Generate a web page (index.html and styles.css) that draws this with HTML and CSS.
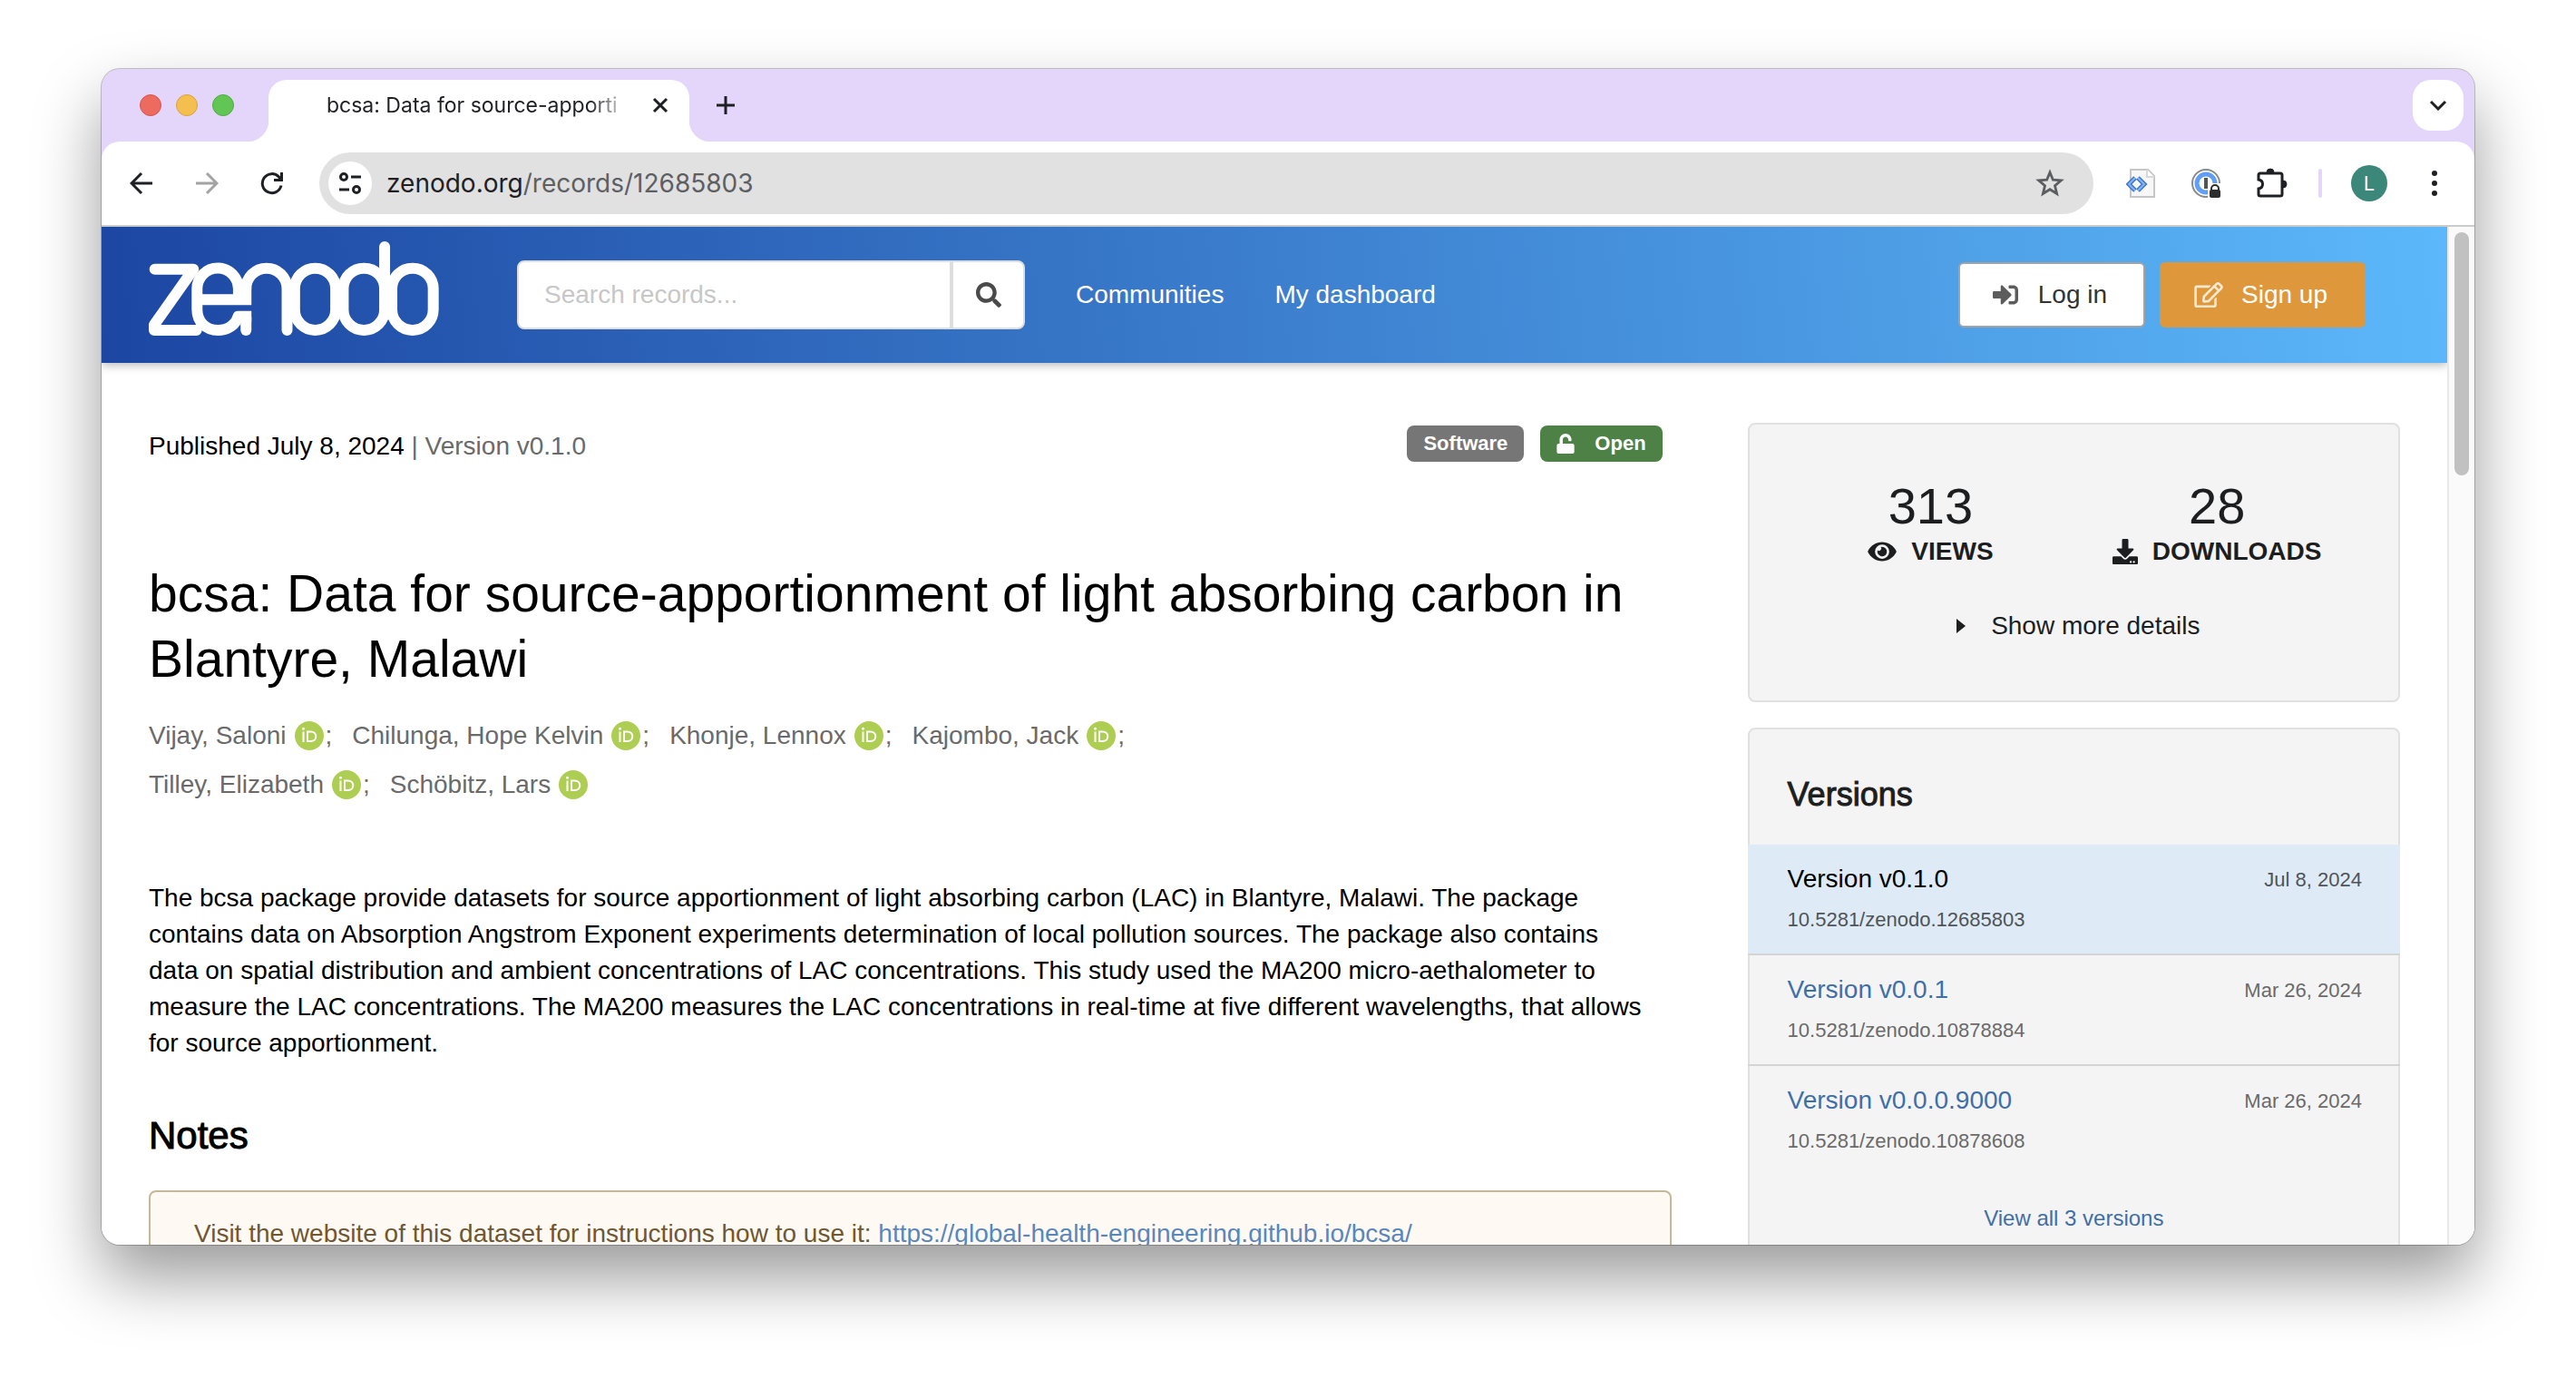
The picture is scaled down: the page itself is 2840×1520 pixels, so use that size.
FILE: index.html
```html
<!DOCTYPE html>
<html lang="en">
<head>
<meta charset="utf-8">
<title>bcsa: Data for source-apportionment of light absorbing carbon in Blantyre, Malawi</title>
<link rel="stylesheet" href="styles.css">
</head>
<body>
<svg class="defs" aria-hidden="true">
  <symbol id="orcid" viewBox="0 0 32 32">
    <circle cx="16" cy="16" r="16" fill="#aece53"/>
    <g fill="none" stroke="#fff" stroke-width="2">
      <path d="M9.500 11.500V23M14 11.500h3.500c3.700 0 5.800 2.400 5.800 5.300S21.200 22 17.500 22H14z"/>
    </g>
    <circle cx="9.500" cy="8.300" r="1.500" fill="#fff"/>
  </symbol>
</svg>
<div class="window">
  <div class="tabstrip">
    <div class="lights"><span class="light red"></span><span class="light amber"></span><span class="light green"></span></div>
    <div class="tab">
      <span class="tab-title">bcsa: Data for source-apporti</span>
      <button class="plain tab-close" aria-label="Close tab"><svg width="18" height="18" viewBox="0 0 18 18"><path d="M2 2l14 14M16 2L2 16" stroke="#1f2024" stroke-width="3" fill="none"/></svg></button>
    </div>
    <button class="plain new-tab" aria-label="New tab"><svg width="20" height="20" viewBox="0 0 20 20"><path d="M10 0v20M0 10h20" stroke="#1f2024" stroke-width="3"/></svg></button>
    <button class="plain tab-search" aria-label="Search tabs"><svg width="20" height="12" viewBox="0 0 20 12"><path d="M2 2l8 8 8-8" stroke="#1f2024" stroke-width="3" fill="none"/></svg></button>
  </div>
  <div class="toolbar">
    <button class="plain tool" aria-label="Back"><svg width="26" height="26" viewBox="0 0 26 26"><path d="M25 13H3M13 2L2 13l11 11" stroke="#1f2024" stroke-width="3" fill="none"/></svg></button>
    <button class="plain tool" aria-label="Forward"><svg width="26" height="26" viewBox="0 0 26 26"><path d="M1 13h22M13 2l11 11-11 11" stroke="#a3a3a3" stroke-width="3" fill="none"/></svg></button>
    <button class="plain tool" aria-label="Reload"><svg width="26" height="26" viewBox="0 0 26 26"><path d="M23 15.500A10.500 10.500 0 1 1 20.500 6l2.500 3" stroke="#1f2024" stroke-width="3" fill="none"/><path d="M25 1v10H15V8h7V1z" fill="#1f2024"/></svg></button>
    <div class="omnibox">
      <button class="plain site-info" aria-label="Site information"><svg width="26" height="26" viewBox="0 0 26 26" fill="none" stroke="#1f2024" stroke-width="3"><circle cx="6" cy="6" r="3.500"/><path d="M14 6h11M1 20h11"/><circle cx="20" cy="20" r="3.500"/></svg></button>
      <span class="url">zenodo.org<span class="url-path">/records/12685803</span></span>
      <button class="plain tool" aria-label="Bookmark this page"><svg width="32" height="32" viewBox="0 0 32 32"><path d="M16 4l3.400 8.200 8.900.7-6.800 5.800 2.100 8.700L16 22.700l-7.600 4.700 2.100-8.700-6.800-5.800 8.900-.7z" fill="none" stroke="#5b5d61" stroke-width="2.800"/></svg></button>
    </div>
    <button class="plain tool" aria-label="Code extension"><svg width="32" height="34" viewBox="0 0 32 34"><path d="M5 2h19l7 7v23H5z" fill="#f7f7f7" stroke="#c6c6c6" stroke-width="2"/><path d="M23 2v8h8" fill="#fff" stroke="#d8d8d8" stroke-width="2"/><path d="M10 11l-7 7 7 7M13 11l7 7-7 7" fill="none" stroke="#3f77cf" stroke-width="5"/><path d="M10 11l-7 7 7 7M13 11l7 7-7 7" fill="none" stroke="#84b3ee" stroke-width="2"/></svg></button>
    <button class="plain tool" aria-label="Password manager"><svg width="32" height="32" viewBox="0 0 32 32"><circle cx="16" cy="16" r="15" fill="#fff" stroke="#8a8a8a" stroke-width="2"/><circle cx="16" cy="16" r="10" fill="#fff" stroke="#609ff5" stroke-width="5"/><path d="M18 16h14v16H18z" fill="#fff"/><path d="M14 10h4v12h-4z" fill="#555"/><path d="M22 24v-2a4 4 0 0 1 8 0v2" fill="none" stroke="#2d2d2d" stroke-width="2"/><rect x="20" y="23" width="12" height="9" rx="2" fill="#2d2d2d"/></svg></button>
    <button class="plain tool" aria-label="Extensions"><svg width="36" height="36" viewBox="-1 0 36 36"><path d="M5 7h22q2 0 2 2v21q0 2-2 2H5q-2 0-2-2v-6c6-1 6-9 0-10V9q0-2 2-2z" fill="none" stroke="#1f2024" stroke-width="3"/><path d="M12 6a4 4 0 0 1 8 0zM30 15a4 4 0 0 1 0 8z" fill="#1f2024" stroke="#1f2024"/></svg></button>
    <span class="tool-divider"></span>
    <button class="plain avatar" aria-label="Profile">L</button>
    <button class="plain tool" aria-label="Menu"><svg width="6" height="28" viewBox="0 0 6 28" fill="#1f2024"><circle cx="3" cy="3" r="3"/><circle cx="3" cy="14" r="3"/><circle cx="3" cy="25" r="3"/></svg></button>
  </div>
  <div class="viewport">
    <div class="page">
      <header class="site-header">
        <a class="logo" href="#" aria-label="Zenodo home"><svg width="320" height="105" viewBox="42 47 961 315" fill="none" stroke="#fff" stroke-width="36" stroke-linejoin="round">
          <path stroke-linecap="round" d="M62 139H190L60 323V341H200M500 341V204a68 68 0 0 0-136 0M823 65V204"/>
          <path d="M364 200V258M202 240H382M339 240V204a68 68 0 0 0-137 0V272c0 42 30 69 69 69 34 0 60-20 67-46H382"/>
          <path stroke-linecap="round" d="M364 341V300"/>
          <rect x="525" y="136" width="136" height="205" rx="68"/>
          <rect x="686" y="136" width="137" height="205" rx="68"/>
          <rect x="847" y="136" width="137" height="205" rx="68"/>
        </svg></a>
        <form class="search">
          <input type="text" placeholder="Search records..." aria-label="Search records">
          <button type="button" aria-label="Search"><svg width="28" height="28" viewBox="0 0 512 512"><path fill="#4a4a4a" d="M505 442.700L405.300 343c-4.500-4.500-10.600-7-17-7H372c27.600-35.300 44-79.700 44-128C416 93.100 322.900 0 208 0S0 93.100 0 208s93.100 208 208 208c48.300 0 92.700-16.400 128-44v16.300c0 6.400 2.500 12.500 7 17l99.700 99.700c9.400 9.400 24.600 9.400 33.900 0l28.300-28.300c9.400-9.400 9.400-24.600.1-34zM208 336c-70.700 0-128-57.200-128-128 0-70.700 57.200-128 128-128 70.700 0 128 57.200 128 128 0 70.700-57.200 128-128 128z"/></svg></button>
        </form>
        <nav class="site-nav"><a href="#">Communities</a><a href="#">My dashboard</a></nav>
        <div class="account">
          <button class="login"><svg width="28" height="28" viewBox="0 0 512 512"><path fill="#5c5c5c" d="M416 448h-84c-6.600 0-12-5.400-12-12v-40c0-6.600 5.400-12 12-12h84c17.700 0 32-14.300 32-32V160c0-17.700-14.300-32-32-32h-84c-6.600 0-12-5.400-12-12V76c0-6.600 5.400-12 12-12h84c53 0 96 43 96 96v192c0 53-43 96-96 96zm-47-209L201 71c-15-15-41-4.500-41 17v96H24c-13.300 0-24 10.700-24 24v96c0 13.300 10.700 24 24 24h136v96c0 21.500 26 32 41 17l168-168c9.300-9.400 9.300-24.600 0-34z"/></svg>Log in</button>
          <button class="signup"><svg width="32" height="28" viewBox="0 0 576 512"><path fill="#fbe9d2" d="M402.300 344.900l32-32c5-5 13.700-1.500 13.700 5.700V464c0 26.500-21.500 48-48 48H48c-26.500 0-48-21.500-48-48V112c0-26.500 21.500-48 48-48h273.500c7.100 0 10.700 8.600 5.700 13.700l-32 32c-1.500 1.500-3.500 2.300-5.700 2.300H48v352h352V350.500c0-2.100.8-4.100 2.300-5.600zm156.600-201.800L296.300 405.700l-90.400 10c-26.200 2.900-48.500-19.200-45.600-45.600l10-90.400L432.900 17.100c22.900-22.900 59.900-22.900 82.700 0l43.200 43.200c22.900 22.900 22.900 60 .1 82.800zM460.100 174L402 115.900 216.200 301.800l-7.300 65.300 65.300-7.300L460.100 174zm64.800-79.700l-43.200-43.200c-4.100-4.100-10.800-4.100-14.800 0L436 82l58.100 58.100 30.900-30.900c4-4.200 4-10.800-.1-14.900z"/></svg>Sign up</button>
        </div>
      </header>
      <div class="columns">
        <main>
          <div class="meta">
            <p>Published July 8, 2024 <span class="muted">| Version v0.1.0</span></p>
            <div class="badges">
              <span class="badge">Software</span>
              <span class="badge open"><svg width="20" height="22" viewBox="0 0 448 512"><path fill="#fff" d="M400 256H152V152.900c0-39.600 31.700-72.500 71.300-72.900 40-.4 72.700 32.100 72.700 72v16c0 13.300 10.700 24 24 24h32c13.300 0 24-10.700 24-24v-16C376 68 307.500-.3 223.500 0 139.500.3 72 69.500 72 153.500V256H48c-26.500 0-48 21.500-48 48v160c0 26.500 21.500 48 48 48h352c26.500 0 48-21.500 48-48V304c0-26.500-21.500-48-48-48z"/></svg>Open</span>
            </div>
          </div>
          <h1>bcsa: Data for source-apportionment of light absorbing carbon in Blantyre, Malawi</h1>
          <ul class="authors">
            <li><a href="#">Vijay, Saloni</a><svg class="orcid"><use href="#orcid"/></svg>;</li>
            <li><a href="#">Chilunga, Hope Kelvin</a><svg class="orcid"><use href="#orcid"/></svg>;</li>
            <li><a href="#">Khonje, Lennox</a><svg class="orcid"><use href="#orcid"/></svg>;</li>
            <li><a href="#">Kajombo, Jack</a><svg class="orcid"><use href="#orcid"/></svg>;</li>
            <li><a href="#">Tilley, Elizabeth</a><svg class="orcid"><use href="#orcid"/></svg>;</li>
            <li><a href="#">Schöbitz, Lars</a><svg class="orcid"><use href="#orcid"/></svg></li>
          </ul>
          <p class="description">The bcsa package provide datasets for source apportionment of light absorbing carbon (LAC) in Blantyre, Malawi. The package contains data on Absorption Angstrom Exponent experiments determination of local pollution sources. The package also contains data on spatial distribution and ambient concentrations of LAC concentrations. This study used the MA200 micro-aethalometer to measure the LAC concentrations. The MA200 measures the LAC concentrations in real-time at five different wavelengths, that allows for source apportionment.</p>
          <h2>Notes</h2>
          <div class="note">Visit the website of this dataset for instructions how to use it: <a href="#">https://global-health-engineering.github.io/bcsa/</a></div>
        </main>
        <aside>
          <section class="card stats">
            <div class="counts">
              <div><div class="count">313</div><div class="count-label"><svg width="32" height="28" viewBox="0 0 576 512"><path fill="#1d1e1f" d="M572.520 241.400C518.290 135.590 410.930 64 288 64S57.680 135.640 3.480 241.410a32.350 32.350 0 0 0 0 29.190C57.710 376.410 165.070 448 288 448s230.320-71.640 284.520-177.410a32.350 32.350 0 0 0 0-29.190zM288 400a144 144 0 1 1 144-144 143.930 143.930 0 0 1-144 144zm0-240a95.310 95.310 0 0 0-25.310 3.790 47.850 47.850 0 0 1-66.900 66.900A95.780 95.780 0 1 0 288 160z"/></svg>VIEWS</div></div>
              <div><div class="count">28</div><div class="count-label"><svg width="28" height="28" viewBox="0 0 512 512"><path fill="#1d1e1f" d="M216 0h80c13.300 0 24 10.700 24 24v168h87.700c17.800 0 26.700 21.500 14.100 34.100L269.700 378.300c-7.500 7.500-19.800 7.500-27.300 0L90.100 226.100c-12.600-12.600-3.700-34.100 14.100-34.100H192V24c0-13.300 10.700-24 24-24zm296 376v112c0 13.300-10.700 24-24 24H24c-13.300 0-24-10.700-24-24V376c0-13.300 10.700-24 24-24h146.700l49 49c20.100 20.100 52.500 20.100 72.600 0l49-49H488c13.300 0 24 10.700 24 24zm-124 88c0-11-9-20-20-20s-20 9-20 20 9 20 20 20 20-9 20-20zm64 0c0-11-9-20-20-20s-20 9-20 20 9 20 20 20 20-9 20-20z"/></svg>DOWNLOADS</div></div>
            </div>
            <button class="plain more"><svg width="10" height="18" viewBox="0 0 10 18"><path d="M0 1v16l10-8z" fill="#1d1e1f"/></svg>Show more details</button>
          </section>
          <section class="card versions">
            <h3>Versions</h3>
            <ul>
              <li class="current"><a href="#">Version v0.1.0</a><time>Jul 8, 2024</time><span>10.5281/zenodo.12685803</span></li>
              <li><a href="#">Version v0.0.1</a><time>Mar 26, 2024</time><span>10.5281/zenodo.10878884</span></li>
              <li><a href="#">Version v0.0.0.9000</a><time>Mar 26, 2024</time><span>10.5281/zenodo.10878608</span></li>
            </ul>
            <a class="view-all" href="#">View all 3 versions</a>
          </section>
        </aside>
      </div>
    </div>
    <div class="scrollbar"><div class="thumb"></div></div>
  </div>
</div>
</body>
</html>
```
FILE: styles.css
```css
* { box-sizing: border-box; }

body {
  margin: 0;
  padding: 76px 112px 148px;
  height: 100vh;
  overflow: hidden;
  background: #fff;
  color: #000;
  font: 28px/40px "Liberation Sans", Arial, sans-serif;
}

h1, h2, h3, p, ul { margin: 0; padding: 0; font-weight: 400; }
ul { list-style: none; }
a { color: #3f6fa8; text-decoration: none; }
button, input { font: inherit; }
svg { display: block; flex: none; }
.defs { position: absolute; width: 0; height: 0; }

.plain {
  display: flex;
  align-items: center;
  justify-content: center;
  padding: 0;
  border: 0;
  background: none;
  color: inherit;
}

.window {
  display: flex;
  flex-direction: column;
  height: 100%;
  overflow: hidden;
  border-radius: 20px;
  background: #e4d5fb;
  box-shadow: 0 0 0 1px rgba(0, 0, 0, .22), 0 36px 72px rgba(0, 0, 0, .4);
}

/* Tab strip */
.tabstrip {
  display: flex;
  flex: none;
  align-items: flex-start;
  height: 80px;
  padding: 12px 12px 0 42px;
  font-family: Inter, sans-serif;
}
.lights { display: flex; gap: 16px; padding-top: 16px; }
.light { width: 24px; height: 24px; border-radius: 50%; }
.red { background: #ec6a5e; border: 1px solid #d5564b; }
.amber { background: #f4bf4f; border: 1px solid #d8a23c; }
.green { background: #61c654; border: 1px solid #4fab43; }

.tab {
  position: relative;
  display: flex;
  align-items: center;
  gap: 16px;
  width: 464px;
  height: 68px;
  margin-left: 38px;
  padding: 0 16px 12px 64px;
  border-radius: 20px 20px 0 0;
  background: #fff;
}
.tab::before, .tab::after {
  content: "";
  position: absolute;
  bottom: 0;
  width: 24px;
  height: 24px;
}
.tab::before { right: 100%; background: radial-gradient(circle at 0 0, transparent 24px, #fff 25px); }
.tab::after { left: 100%; background: radial-gradient(circle at 100% 0, transparent 24px, #fff 25px); }
.tab-title {
  flex: 1;
  color: #1f2024;
  font-size: 23px;
  white-space: nowrap;
  mask-image: linear-gradient(to right, #000 86%, transparent);
}
.tab-close { width: 32px; height: 32px; }
.new-tab { width: 40px; height: 56px; margin-left: 20px; }
.tab-search { width: 56px; height: 56px; margin-left: auto; border-radius: 20px; background: #fff; }

/* Toolbar */
.toolbar {
  display: flex;
  flex: none;
  align-items: center;
  gap: 32px;
  height: 94px;
  padding: 0 24px;
  border-bottom: 2px solid #c9cccb;
  border-radius: 20px 20px 0 0;
  background: #fff;
  font-family: Inter, sans-serif;
}
.tool { width: 40px; height: 40px; flex: none; }
.omnibox {
  display: flex;
  flex: 1;
  align-items: center;
  height: 68px;
  padding: 0 28px 0 10px;
  border-radius: 34px;
  background: #e1e1e1;
}
.site-info { width: 48px; height: 48px; border-radius: 50%; background: #fff; }
.url { flex: 1; margin-left: 16px; color: #1f2024; font-size: 28px; }
.url-path { color: #5d5f63; }
.tool-divider { width: 4px; height: 32px; border-radius: 2px; background: #e4d5fb; }
.avatar { width: 40px; height: 40px; border-radius: 50%; background: #3b877a; color: #fff; font-size: 22px; }

/* Page area */
.viewport { display: flex; flex: 1; min-height: 0; background: #fff; }
.page { flex: 1; min-width: 0; overflow: hidden; }
.scrollbar {
  width: 30px;
  padding: 6px 6px 0;
  border-left: 2px solid #e8e8e8;
  background: #fafafa;
}
.thumb { width: 16px; height: 268px; border-radius: 8px; background: #c1c1c1; }

.site-header {
  display: flex;
  align-items: center;
  height: 150px;
  padding: 0 90px 0 52px;
  background: linear-gradient(84deg, #1c46a2, #5cb8fa);
  box-shadow: 0 2px 10px rgba(0, 0, 0, .3);
}
.logo { padding-bottom: 14px; }
.search { display: flex; width: 560px; height: 76px; margin-left: 86px; }
.search input {
  flex: 1;
  min-width: 0;
  padding: 0 28px;
  border: 2px solid #dedede;
  border-radius: 8px 0 0 8px;
  background: #fff;
}
.search input::placeholder { color: #c7c7c7; opacity: 1; }
.search button {
  display: flex;
  align-items: center;
  justify-content: center;
  width: 81px;
  padding: 0;
  border: 2px solid #dedede;
  border-radius: 0 8px 8px 0;
  background: #fff;
}
.site-nav { display: flex; gap: 56px; margin-left: 56px; }
.site-nav a { color: #fff; }
.account { display: flex; gap: 16px; margin-left: auto; }
.account button {
  display: flex;
  align-items: center;
  height: 72px;
  padding: 0 40px 0 36px;
  border: 2px solid #a3a3a3;
  border-radius: 6px;
}
.account .login { gap: 22px; background: #fff; color: #333; }
.account .signup { gap: 20px; border-color: #de983b; background: #de983b; color: #fff; }

/* Record */
.columns {
  display: grid;
  grid-template-columns: minmax(0, 7fr) minmax(0, 3fr);
  gap: 84px;
  padding: 66px 52px 60px;
}
.meta { display: flex; justify-content: space-between; align-items: flex-end; height: 46px; }
.muted { color: #6a6a6a; }
.badges { display: flex; gap: 18px; padding: 0 10px 3px 0; }
.badge {
  display: flex;
  align-items: center;
  gap: 22px;
  height: 40px;
  padding: 0 18px;
  border-radius: 8px;
  background: #767676;
  color: #fff;
  font-size: 22px;
  font-weight: 700;
}
.open { background: #4d8146; }

h1 { margin-top: 106px; font-size: 57px; line-height: 72px; }
.authors {
  display: flex;
  flex-wrap: wrap;
  column-gap: 22px;
  width: 75%;
  margin-top: 22px;
  color: #6a6a6a;
  line-height: 54px;
}
.authors li { display: flex; align-items: center; white-space: nowrap; }
.authors a { color: inherit; }
.orcid { width: 32px; height: 32px; margin: 0 2px 0 9px; }
.description { margin-top: 78px; padding-right: 24px; }
h2 { margin-top: 56px; font-size: 42px; line-height: 52px; -webkit-text-stroke: 1px; }
.note {
  margin-top: 34px;
  padding: 26px 48px;
  border: 2px solid #c4b899;
  border-radius: 8px;
  background: #fefaf3;
  color: #6e5732;
}
.note a { color: #5b86bb; }

/* Sidebar */
aside { display: flex; flex-direction: column; gap: 28px; color: #1d1e1f; }
.card { border: 2px solid #e0e0e0; border-radius: 8px; background: #f4f4f5; }
.stats { padding: 60px 42px 62px; }
.counts { display: grid; grid-template-columns: 1fr 1fr; text-align: center; }
.count { font-size: 56px; line-height: 60px; }
.count-label { display: flex; align-items: center; justify-content: center; gap: 16px; font-weight: 700; }
.more { gap: 28px; margin: 42px auto 0; padding-left: 10px; }

.versions { padding: 50px 0 60px; }
.versions h3 { padding: 0 42px; font-size: 36px; line-height: 44px; -webkit-text-stroke: 1px; }
.versions ul { margin: 33px -2px 0; }
.versions li {
  display: grid;
  grid-template-columns: 1fr auto;
  row-gap: 9px;
  padding: 18px 42px 21px 44px;
  border-bottom: 2px solid #d4d4d5;
}
.versions li:last-child { border-bottom: 0; }
.versions time, .versions li span { color: #6a6a6a; font-size: 22px; line-height: 32px; }
.versions time { line-height: 42px; height: 40px; }
.versions .current { background: #deebf6; }
.versions .current a { color: #000; }
.versions .current time, .versions .current span { color: #4f5458; }
.view-all { display: block; margin-top: 28px; font-size: 24px; text-align: center; }
```
